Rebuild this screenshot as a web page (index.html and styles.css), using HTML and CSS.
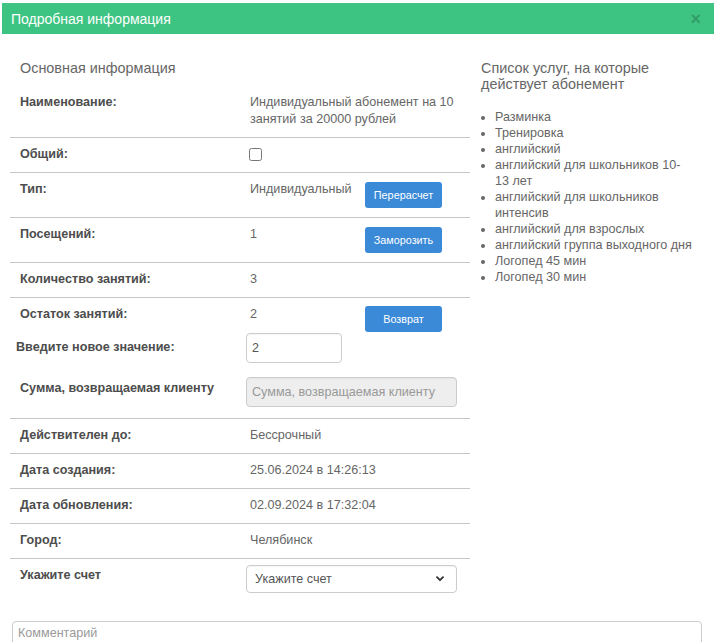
FILE: index.html
```html
<!DOCTYPE html>
<html lang="ru">
<head>
<meta charset="utf-8">
<title>Подробная информация</title>
<link rel="stylesheet" href="styles.css">
</head>
<body>
<div class="modal">
  <div class="modal-header">
    <h4 class="modal-title">Подробная информация</h4>
    <button class="close" type="button">×</button>
  </div>
  <div class="modal-body">
    <div class="cols">
      <div class="col-main">
        <h5 class="section-title">Основная информация</h5>
        <table class="info">
          <tr>
            <th>Наименование:</th>
            <td colspan="2">Индивидуальный абонемент на 10 занятий за 20000 рублей</td>
          </tr>
          <tr>
            <th>Общий:</th>
            <td colspan="2"><input class="check" type="checkbox"></td>
          </tr>
          <tr>
            <th>Тип:</th>
            <td class="val">Индивидуальный</td>
            <td class="act"><button class="btn" type="button">Перерасчет</button></td>
          </tr>
          <tr>
            <th>Посещений:</th>
            <td class="val">1</td>
            <td class="act"><button class="btn" type="button">Заморозить</button></td>
          </tr>
          <tr>
            <th>Количество занятий:</th>
            <td colspan="2">3</td>
          </tr>
          <tr class="last">
            <th>Остаток занятий:</th>
            <td class="val">2</td>
            <td class="act"><button class="btn" type="button">Возврат</button></td>
          </tr>
        </table>

        <div class="form-rows">
          <label class="form-label form-label-narrow" for="newValue">Введите новое значение:</label>
          <input class="field field-short" id="newValue" type="text" value="2">
          <label class="form-label form-label-low" for="refund">Сумма, возвращаемая клиенту</label>
          <input class="field field-wide" id="refund" type="text" placeholder="Сумма, возвращаемая клиенту" disabled>
        </div>

        <table class="info info-bordered">
          <tr>
            <th>Действителен до:</th>
            <td colspan="2">Бессрочный</td>
          </tr>
          <tr>
            <th>Дата создания:</th>
            <td colspan="2">25.06.2024 в 14:26:13</td>
          </tr>
          <tr>
            <th>Дата обновления:</th>
            <td colspan="2">02.09.2024 в 17:32:04</td>
          </tr>
          <tr>
            <th>Город:</th>
            <td colspan="2">Челябинск</td>
          </tr>
          <tr>
            <th>Укажите счет</th>
            <td colspan="2" class="select-cell">
              <div class="select-wrap">
                <select class="field field-select">
                  <option>Укажите счет</option>
                </select>
                <svg class="chevron" width="8" height="6" viewBox="0 0 8 6" aria-hidden="true">
                  <path d="M1 1.2 L4 4.2 L7 1.2" fill="none" stroke="#333" stroke-width="1.8" stroke-linecap="round" stroke-linejoin="round"/>
                </svg>
              </div>
            </td>
          </tr>
        </table>
      </div>

      <div class="col-side">
        <h5 class="section-title">Список услуг, на которые действует абонемент</h5>
        <ul class="services">
          <li>Разминка</li>
          <li>Тренировка</li>
          <li>английский</li>
          <li>английский для школьников 10-13 лет</li>
          <li>английский для школьников интенсив</li>
          <li>английский для взрослых</li>
          <li>английский группа выходного дня</li>
          <li>Логопед 45 мин</li>
          <li>Логопед 30 мин</li>
        </ul>
      </div>
    </div>

    <textarea class="comment" placeholder="Комментарий"></textarea>
  </div>
</div>
</body>
</html>
```

FILE: styles.css
```css
* {
  box-sizing: border-box;
}

html, body {
  margin: 0;
  padding: 0;
  background: #fff;
}

body {
  font-family: "Liberation Sans", Arial, sans-serif;
  font-size: 12.6px;
  color: #666;
  overflow: hidden;
}

.modal {
  width: 712px;
  margin: 3px 2px 0 2px;
}

/* green title bar */
.modal-header {
  height: 31px;
  background: #3ec482;
  display: flex;
  align-items: center;
  justify-content: space-between;
  padding: 0 13px 0 9px;
}

.modal-title {
  margin: 0;
  font-size: 14px;
  font-weight: normal;
  color: #fff;
}

.close {
  border: 0;
  background: none;
  padding: 0;
  font-family: "Liberation Sans", Arial, sans-serif;
  font-size: 18px;
  font-weight: bold;
  line-height: 1;
  color: #000;
  opacity: 0.2;
  cursor: pointer;
}

.modal-body {
  padding: 26px 0 0 8px;
}

.cols {
  display: flex;
  align-items: flex-start;
}

.col-main {
  width: 460px;
  flex: none;
}

.col-side {
  width: 235px;
  flex: none;
  padding: 0 12px 0 11px;
}

.section-title {
  margin: 0;
  font-size: 14.4px;
  font-weight: normal;
  line-height: 16px;
  color: #666;
}

.col-main .section-title {
  padding-left: 10px;
  margin-bottom: 10px;
}

/* key / value rows */
.info {
  width: 460px;
  border-collapse: collapse;
  table-layout: fixed;
}

.info th,
.info td {
  padding: 8px 0 9px 10px;
  line-height: 17px;
  vertical-align: top;
  text-align: left;
}

.info th {
  width: 230px;
  font-weight: bold;
  color: #4d4d4d;
}

.info td.val {
  width: 115px;
}

.info td.act {
  padding-top: 9px;
  padding-bottom: 9px;
}

.info tr + tr {
  border-top: 1px solid #c6c6c6;
}

.info tr.last td.act {
  padding-top: 8px;
  padding-bottom: 0;
}

.info-bordered tr:first-child {
  border-top: 1px solid #c6c6c6;
}

.check {
  margin: 2px 0 0 -1px;
  width: 13px;
  height: 13px;
  vertical-align: top;
}

.btn {
  display: block;
  width: 77px;
  height: 26px;
  border: 0;
  border-radius: 3px;
  background: #3b8ad8;
  color: #fff;
  font-family: "Liberation Sans", Arial, sans-serif;
  font-size: 10.8px;
  padding: 0;
  cursor: pointer;
}

/* inputs below the table */
.form-rows {
  display: grid;
  grid-template-columns: 236px 1fr;
  row-gap: 14px;
  align-items: start;
  margin-top: 1px;
  padding-bottom: 11px;
}

.form-label {
  font-weight: bold;
  color: #4d4d4d;
  line-height: 17px;
  padding: 6px 0 0 10px;
}

.form-label-narrow {
  padding-left: 6px;
}

.form-label-low {
  padding-top: 3px;
}

.field {
  height: 30px;
  border: 1px solid #ccc;
  border-radius: 4px;
  background: #fff;
  font-family: "Liberation Sans", Arial, sans-serif;
  font-size: 12.6px;
  color: #555;
  padding: 0 5px;
  box-shadow: inset 0 1px 1px rgba(0, 0, 0, 0.04);
}

.field-short {
  width: 96px;
}

.field-wide {
  width: 211px;
}

.field:disabled {
  background: #eee;
}

.field::placeholder {
  color: #999;
}

.select-cell {
  padding: 6px 0 28px 6px !important;
}

.select-wrap {
  position: relative;
  width: 211px;
}

.field-select {
  width: 211px;
  height: 28px;
  appearance: none;
  -webkit-appearance: none;
  padding: 0 24px 0 8px;
  color: #555;
}

.chevron {
  position: absolute;
  right: 13px;
  top: 11px;
  pointer-events: none;
}

/* services list */
.services {
  margin: 17px 0 0 0;
  padding: 0 0 0 14px;
  line-height: 16px;
  color: #666;
}

.comment {
  display: block;
  width: 690px;
  height: 40px;
  margin: 0 0 0 2px;
  border: 1px solid #ccc;
  border-radius: 4px;
  font-family: "Liberation Sans", Arial, sans-serif;
  font-size: 12.6px;
  padding: 4px 5px;
  resize: none;
  color: #555;
}

.comment::placeholder {
  color: #999;
}
```
